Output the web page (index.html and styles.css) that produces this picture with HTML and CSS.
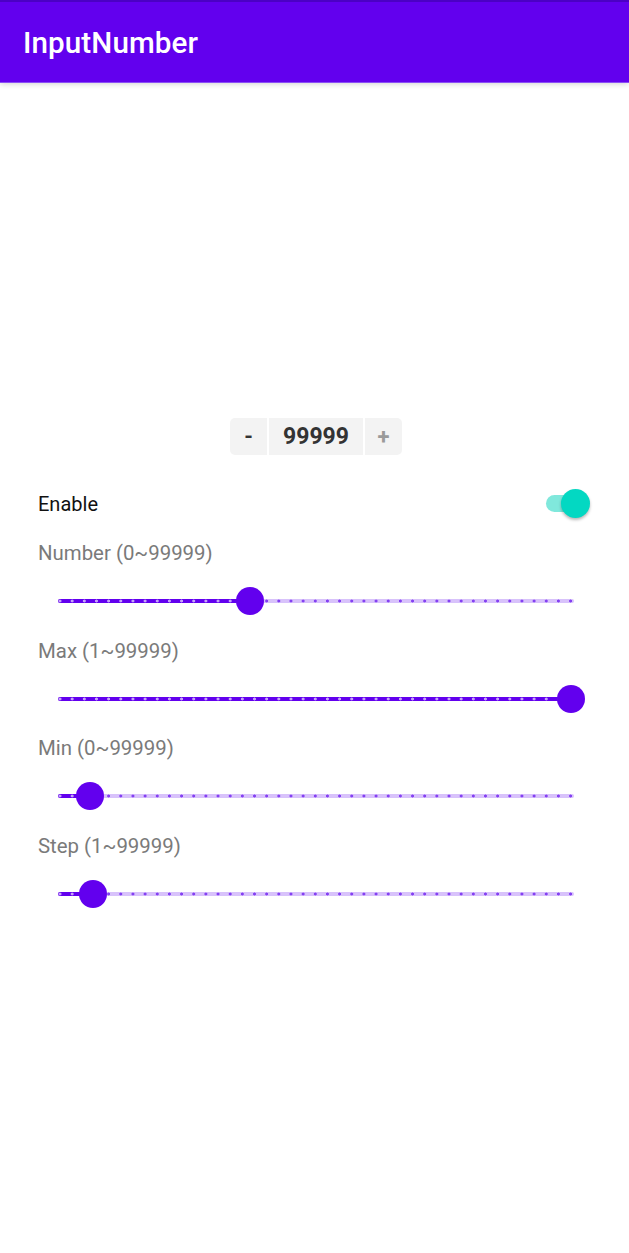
FILE: index.html
```html
<!DOCTYPE html>
<html>
<head>
<meta charset="utf-8">
<link rel="stylesheet" href="styles.css">
</head>
<body>
<header class="appbar"><h1 class="title">InputNumber</h1></header>
<main class="content">
  <div class="stepper-wrap">
    <div class="stepper">
      <button class="step-btn minus">-</button>
      <div class="step-value">99999</div>
      <button class="step-btn plus">+</button>
    </div>
  </div>
  <section class="settings">
    <div class="row-switch">
      <span class="switch-label">Enable</span>
      <span class="switch"><span class="switch-track"></span><span class="switch-thumb"></span></span>
    </div>

    <div class="label first">Number (0~99999)</div>
    <div class="slider-row">
      <div class="track">
        <div class="fill" style="width:192px"></div>
        <div class="thumb" style="left:192px"></div>
      </div>
    </div>

    <div class="label">Max (1~99999)</div>
    <div class="slider-row">
      <div class="track">
        <div class="fill" style="width:513px"></div>
        <div class="thumb" style="left:513px"></div>
      </div>
    </div>

    <div class="label">Min (0~99999)</div>
    <div class="slider-row">
      <div class="track">
        <div class="fill" style="width:32px"></div>
        <div class="thumb" style="left:32px"></div>
      </div>
    </div>

    <div class="label">Step (1~99999)</div>
    <div class="slider-row">
      <div class="track">
        <div class="fill" style="width:35px"></div>
        <div class="thumb" style="left:35px"></div>
      </div>
    </div>
  </section>
</main>
</body>
</html>
```

FILE: styles.css
```css
* { box-sizing: border-box; }
html, body { margin: 0; padding: 0; background: #ffffff; }
body {
  font-family: Roboto, "Noto Sans", "Liberation Sans", sans-serif;
  width: 629px;
  height: 1253px;
  overflow: hidden;
}
.appbar {
  height: 82px;
  background: #6200ee;
  border-top: 2px solid #4b00c4;
  display: flex;
  align-items: center;
  padding-left: 23px;
  box-shadow: 0 1px 0 #8a4ef5, 0 2px 6px rgba(0,0,0,0.18);
  position: relative;
  z-index: 1;
}
.title {
  margin: 0;
  color: #ffffff;
  font-size: 29.6px;
  font-weight: 500;
  letter-spacing: 0.1px;
  padding-top: 2px;
}
.content {
  padding-top: 336px;
}
.stepper-wrap {
  display: flex;
  justify-content: center;
  padding-left: 3px;
}
.stepper {
  display: flex;
  gap: 2px;
  height: 37px;
}
.step-btn {
  width: 37px;
  height: 37px;
  border: none;
  background: #f3f3f3;
  font-family: Roboto, "Liberation Sans", sans-serif;
  font-size: 22px;
  font-weight: 700;
  padding: 0;
}
.minus { color: #333333; border-radius: 5px 0 0 5px; }
.plus { color: #9a9a9a; border-radius: 0 5px 5px 0; }
.step-value {
  width: 94px;
  background: #f3f3f3;
  display: flex;
  align-items: center;
  justify-content: center;
  font-size: 23px;
  font-weight: 700;
  color: #333333;
}
.settings {
  padding: 0 40px 0 38px;
  margin-top: 24px;
}
.row-switch {
  height: 50px;
  display: flex;
  align-items: center;
  justify-content: space-between;
}
.switch-label {
  font-size: 20px;
  color: #111111;
}
.switch {
  position: relative;
  width: 47px;
  height: 30px;
  display: block;
  margin-right: -1px;
}
.switch-track {
  position: absolute;
  left: 3px;
  top: 6px;
  width: 40px;
  height: 17px;
  border-radius: 9px;
  background: #80e8dc;
}
.switch-thumb {
  position: absolute;
  right: 0;
  top: 0;
  width: 29px;
  height: 29px;
  border-radius: 50%;
  background: #03d8c2;
  box-shadow: 0 2px 3px rgba(0,0,0,0.28);
}
.label {
  height: 42px;
  margin-top: 1.5px;
  display: flex;
  align-items: center;
  font-size: 20.4px;
  color: #7a7a7a;
}
.label.first { margin-top: 3px; }
.slider-row {
  height: 54px;
  display: flex;
  align-items: center;
  padding-left: 20px;
}
.track {
  position: relative;
  width: 516px;
  height: 4px;
  border-radius: 2px;
  background-color: #d8c2fb;
  background-image: radial-gradient(circle, #8440f2 0, #8440f2 1.2px, rgba(132,64,242,0) 1.8px);
  background-size: 12.17px 4px;
  background-position: -4.08px 0;
  background-repeat: repeat-x;
}
.fill {
  position: absolute;
  left: 0;
  top: 0;
  height: 4px;
  border-radius: 2px;
  background-color: #6200ee;
  background-image: radial-gradient(circle, #c6a3fa 0, #c6a3fa 1.2px, rgba(198,163,250,0) 1.8px);
  background-size: 12.17px 4px;
  background-position: -4.08px 0;
  background-repeat: repeat-x;
}
.thumb {
  position: absolute;
  top: 2px;
  width: 28px;
  height: 28px;
  margin-left: -14px;
  margin-top: -14px;
  border-radius: 50%;
  background: #6200ee;
}
```
